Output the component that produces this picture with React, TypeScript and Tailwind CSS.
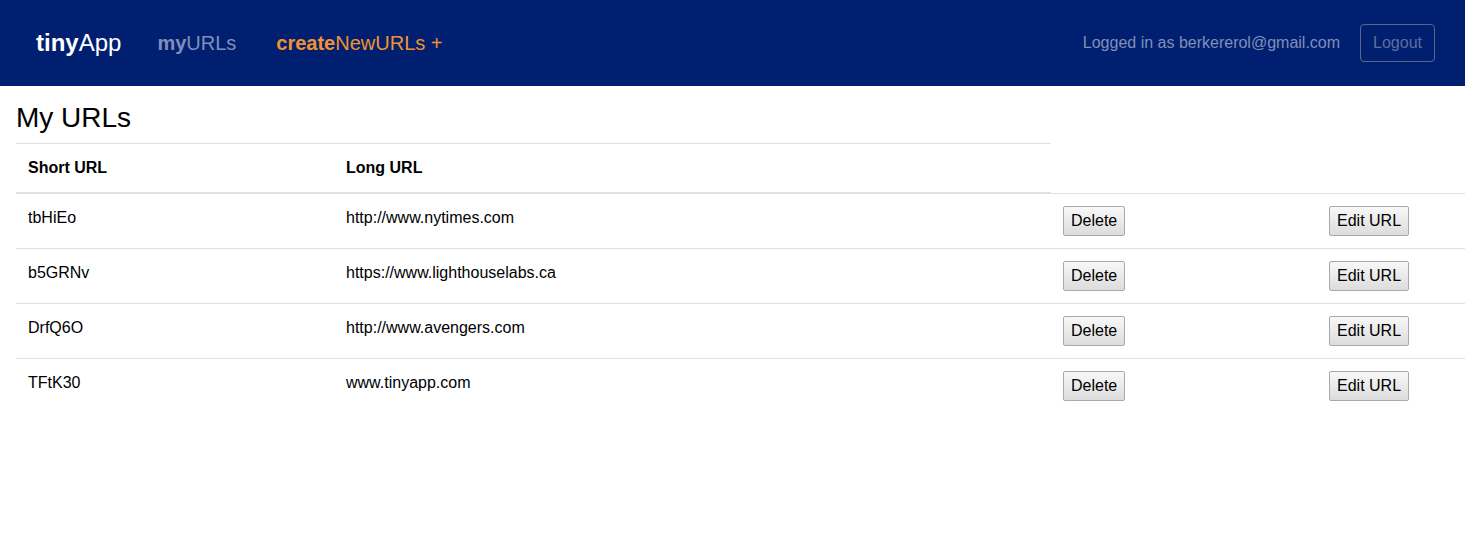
import React from "react";

const rows = [
  { s: "tbHiEo", l: "http://www.nytimes.com" },
  { s: "b5GRNv", l: "https://www.lighthouselabs.ca" },
  { s: "DrfQ6O", l: "http://www.avengers.com" },
  { s: "TFtK30", l: "www.tinyapp.com" },
];

function Btn({ children }: { children: React.ReactNode }) {
  return (
    <button className="h-[30px] px-[7px] text-[16px] leading-[24px] text-black border border-[#a9a9a9] rounded-[2px] bg-gradient-to-b from-[#f8f8f8] to-[#dcdcdc]">
      {children}
    </button>
  );
}

export default function App() {
  return (
    <div className="min-h-[541px] bg-white text-[#212529]" style={{ fontFamily: '"Liberation Sans", Arial, sans-serif' }}>
      <nav className="h-[86px] bg-[#001f70] flex items-center pl-[36px] pr-[30px]">
        <div className="text-[24px] leading-none text-white">
          <b>tiny</b>App
        </div>
        <div className="ml-[36px] text-[20px] leading-none text-[#808fb8]">
          <b>my</b>URLs
        </div>
        <div className="ml-[40px] text-[20px] leading-none text-[#f0922e]">
          <b>create</b>NewURLs +
        </div>
        <div className="ml-auto text-[16px] text-[#808fb8]">Logged in as berkererol@gmail.com</div>
        <button className="ml-[20px] h-[38px] px-[12px] text-[16px] text-[#5f6e9c] border border-[#5c6687] rounded-[4px]">
          Logout
        </button>
      </nav>
      <div className="pl-[16px]">
        <h3 className="mt-[15px] mb-[8px] text-[28px] leading-[1.2] text-black">My URLs</h3>
        <div className="relative z-10 w-[1035px] flex border-t border-b-2 border-[#dee2e6] mb-[-1px] text-black font-bold text-[16px] leading-[24px]">
          <div className="w-[318px] p-[12px]">Short URL</div>
          <div className="w-[717px] p-[12px]">Long URL</div>
        </div>
        {rows.map((r) => (
          <div key={r.s} className="flex border-t border-[#dee2e6] text-black text-[16px] leading-[24px]">
            <div className="w-[318px] shrink-0 p-[12px]">{r.s}</div>
            <div className="w-[717px] shrink-0 p-[12px]">{r.l}</div>
            <div className="w-[266px] shrink-0 p-[12px]">
              <Btn>Delete</Btn>
            </div>
            <div className="flex-1 p-[12px]">
              <Btn>Edit URL</Btn>
            </div>
          </div>
        ))}
      </div>
    </div>
  );
}
